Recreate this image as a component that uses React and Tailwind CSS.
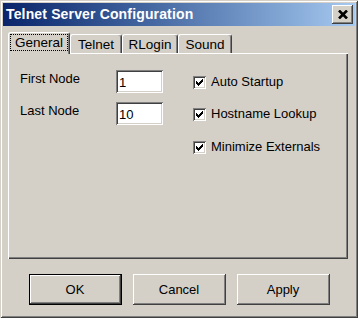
import React from "react";

const raised =
  "shadow-[inset_-1px_-1px_0_#404040,inset_1px_1px_0_#fff,inset_-2px_-2px_0_#808080]";
const sunken =
  "shadow-[inset_1px_1px_0_#808080,inset_-1px_-1px_0_#fff,inset_2px_2px_0_#404040,inset_-2px_-2px_0_#d4d0c8]";

function Check() {
  // 7x7 classic check mark, one rect per column
  const ys = [2, 3, 4, 3, 2, 1, 0];
  return (
    <svg width="7" height="7" viewBox="0 0 7 7" shapeRendering="crispEdges">
      {ys.map((y, x) => (
        <rect key={x} x={x} y={y} width="1" height="3" fill="#000" />
      ))}
    </svg>
  );
}

function CheckRow({ label, className }) {
  return (
    <div className={`flex items-center gap-[5px] h-[13px] ${className}`}>
      <div className={`w-[13px] h-[13px] bg-white flex items-center justify-center ${sunken}`}>
        <Check />
      </div>
      <span className="leading-[13px] -mt-[2px]">{label}</span>
    </div>
  );
}

function Field({ label, value }) {
  return (
    <div className="flex items-start h-[23px]">
      <span className="w-[96px] leading-[15px] mt-[1px]">{label}</span>
      <div className={`w-[47px] h-[23px] bg-white pl-[3px] pt-[5px] leading-[15px] ${sunken}`}>
        {value}
      </div>
    </div>
  );
}

function Tab({ label, active, width }) {
  if (active) {
    return (
      <div
        className={`${width} h-[22px] bg-[#d4d0c8] border-t border-l border-white border-r border-r-[#404040] rounded-t-[3px] shadow-[inset_-1px_0_0_#808080] p-[1px] pb-[3px] relative z-10`}
      >
        <div className="h-full border border-dotted border-black flex items-center justify-center leading-[15px] text-[13.5px]">
          {label}
        </div>
      </div>
    );
  }
  return (
    <div
      className={`${width} h-[19px] mt-[2px] bg-[#d4d0c8] border-t border-l border-white border-r border-r-[#404040] rounded-t-[3px] shadow-[inset_-1px_0_0_#808080] flex items-center justify-center leading-[15px] pt-[1px] text-[13.5px]`}
    >
      {label}
    </div>
  );
}

function Button({ label, isDefault }) {
  if (isDefault) {
    return (
      <div className="w-[93px] h-[31px] border border-black">
        <div className={`w-full h-full flex items-center justify-center bg-[#d4d0c8] ${raised}`}>
          {label}
        </div>
      </div>
    );
  }
  return (
    <div className={`w-[93px] h-[31px] flex items-center justify-center bg-[#d4d0c8] ${raised}`}>
      {label}
    </div>
  );
}

export default function App() {
  return (
    <div className="w-[358px] h-[318px] bg-[#d4d0c8] p-[3px] flex flex-col text-[13px] text-black font-['Liberation_Sans',Arial,sans-serif] shadow-[inset_1px_1px_0_#d4d0c8,inset_-1px_-1px_0_#404040,inset_2px_2px_0_#fff,inset_-2px_-2px_0_#808080]">
      {/* title bar */}
      <div className="h-[23px] flex items-center pl-[3px] pr-[2px] bg-gradient-to-r from-[#0a246a] to-[#a6caf0]">
        <span className="text-white font-bold text-[14px] tracking-[0.15px]">Telnet Server Configuration</span>
        <div className={`ml-auto w-[21px] h-[19px] bg-[#d4d0c8] flex items-center justify-center ${raised}`}>
          <svg width="10" height="9" viewBox="0 0 10 9">
            <path d="M1 0.5L9 8.5M9 0.5L1 8.5" stroke="#000" strokeWidth="2.6" />
          </svg>
        </div>
      </div>

      {/* tabs */}
      <div className="flex items-start h-[22px] mt-[6px] ml-[5px] -mb-[1px]">
        <Tab label="General" active width="w-[62px]" />
        <Tab label="Telnet" width="w-[52px]" />
        <Tab label="RLogin" width="w-[56px]" />
        <Tab label="Sound" width="w-[54px]" />
      </div>

      {/* tab page */}
      <div className="h-[206px] ml-[5px] mr-[7px] border-t border-l border-white shadow-[inset_-1px_-1px_0_#404040,inset_-2px_-2px_0_#808080] flex">
        <div className="flex flex-col gap-[9px] pl-[11px] pt-[16px]">
          <Field label="First Node" value="1" />
          <Field label="Last Node" value="10" />
        </div>
        <div className="flex flex-col ml-[30px] pt-[22px]">
          <CheckRow label="Auto Startup" />
          <CheckRow label="Hostname Lookup" className="mt-[19px]" />
          <CheckRow label="Minimize Externals" className="mt-[20px]" />
        </div>
      </div>

      {/* buttons */}
      <div className="flex justify-center gap-[11px] mt-[15px]">
        <Button label="OK" isDefault />
        <Button label="Cancel" />
        <Button label="Apply" />
      </div>
    </div>
  );
}
